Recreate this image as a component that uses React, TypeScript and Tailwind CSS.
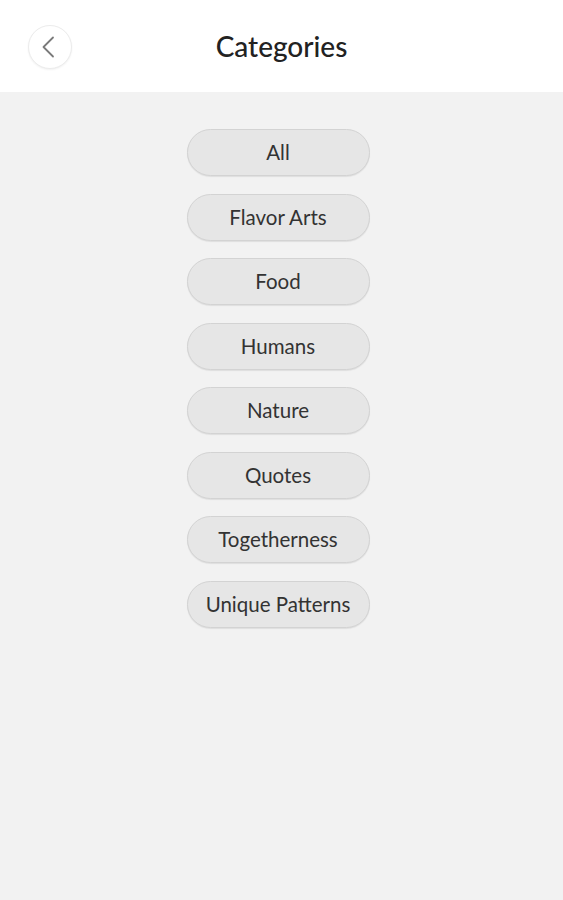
const categories = [
  "All",
  "Flavor Arts",
  "Food",
  "Humans",
  "Nature",
  "Quotes",
  "Togetherness",
  "Unique Patterns",
];

export default function App() {
  return (
    <div
      className="flex min-h-[900px] w-full flex-col bg-[#f2f2f2]"
      style={{ fontFamily: "Lato, 'Open Sans', sans-serif" }}
    >
      <header className="relative flex h-[92px] items-center justify-center bg-white">
        <button className="absolute left-[28px] top-[25px] flex h-[44px] w-[44px] items-center justify-center rounded-full border border-[#ececec] bg-white shadow-[0_1px_2px_rgba(0,0,0,0.06)]">
          <svg width="24" height="24" viewBox="0 0 24 24" fill="none">
            <path d="M15 2.5 L5.5 12 L15 21.5" stroke="#7a7a7a" strokeWidth="1.8" strokeLinecap="round" strokeLinejoin="round" />
          </svg>
        </button>
        <h1 className="text-[28px] font-medium text-[#222]">Categories</h1>
      </header>

      <main className="flex flex-col items-center gap-[17.5px] pr-[7px] pt-[37px]">
        {categories.map((c) => (
          <button
            key={c}
            className="flex h-[47px] w-[183px] items-center justify-center rounded-full border border-[#d3d3d3] bg-[#e6e6e6] text-[20.5px] text-[#333] shadow-[0_1px_1px_rgba(0,0,0,0.08)]"
          >
            {c}
          </button>
        ))}
      </main>
    </div>
  );
}
